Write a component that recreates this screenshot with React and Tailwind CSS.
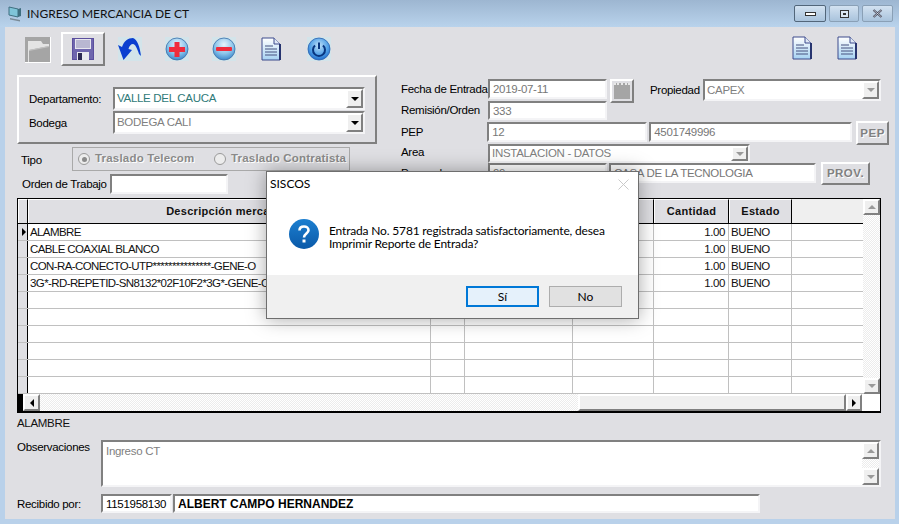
import React from 'react';

const raised = 'border-2 border-t-white border-l-white border-b-[#808080] border-r-[#808080] bg-[#dfdfe3]';
const sunken = 'border-2 border-t-[#808080] border-l-[#808080] border-b-[#f4f4f6] border-r-[#f4f4f6] bg-white';

const rows = [
  { name: 'ALAMBRE', qty: '1.00', state: 'BUENO' },
  { name: 'CABLE COAXIAL BLANCO', qty: '1.00', state: 'BUENO' },
  { name: 'CON-RA-CONECTO-UTP***************-GENE-O', qty: '1.00', state: 'BUENO' },
  { name: '3G*-RD-REPETID-SN8132*02F10F2*3G*-GENE-C', qty: '1.00', state: 'BUENO' },
  {}, {}, {}, {}, {}, {},
];

function Arrow({ dir = 'down', color = '#000' }) {
  const pts = { down: '0,0 8,0 4,4', up: '0,4 8,4 4,0', left: '4,0 4,8 0,4', right: '0,0 0,8 4,4' };
  const vertical = dir === 'up' || dir === 'down';
  return (
    <svg width={vertical ? 8 : 4} height={vertical ? 4 : 8} viewBox={vertical ? '0 0 8 4' : '0 0 4 8'}>
      <polygon points={pts[dir]} fill={color} />
    </svg>
  );
}

function Field({ className, value, textClass = 'text-[#777]' }) {
  return (
    <div className={`${sunken} ${className} shrink-0 overflow-hidden pl-[3px] leading-[17px] whitespace-nowrap ${textClass}`}>
      {value}
    </div>
  );
}

function Combo({ className, value, textClass, disabled }) {
  return (
    <div className={`${sunken} ${className} shrink-0 flex items-stretch`}>
      <div className={`flex-1 pl-[2px] leading-[19px] whitespace-nowrap overflow-hidden ${textClass}`}>{value}</div>
      <div className={`${raised} w-[17px] flex items-center justify-center bg-[#efefef]`}>
        <Arrow dir="down" color={disabled ? '#999' : '#000'} />
      </div>
    </div>
  );
}

function FlagIcon() {
  return (
    <svg width="26" height="26" viewBox="0 0 26 26">
      <rect width="26" height="26" fill="#fff" />
      <rect width="25" height="25" fill="#a5a5a5" />
      <path d="M4 4H16L18 7H24V9L4 13V25H3V4Z" fill="#e4e4e4" />
      <path d="M4 13L24 9V10L4 14Z" fill="#c4c4c4" />
    </svg>
  );
}

function SaveIcon() {
  return (
    <svg width="22" height="22" viewBox="0 0 22 22">
      <rect width="22" height="22" fill="#5b4f9e" />
      <rect x="1" y="1" width="20" height="20" fill="#6f66ae" />
      <rect x="3" y="1" width="16" height="10" fill="#e6e6ee" />
      <path d="M4 3H18M4 5H18M4 7H18M4 9H18" stroke="#8b88b5" />
      <rect x="5" y="14" width="12" height="8" fill="#e9e9ef" />
      <rect x="6" y="15" width="4" height="7" fill="#2d2a55" />
    </svg>
  );
}

function UndoIcon() {
  return (
    <svg width="24" height="24" viewBox="0 0 24 24">
      <rect width="24" height="24" fill="#d3e4ea" />
      <path d="M0 8L4 10C6 4 10 1 15 1C19 2 22 10 23 19L21 17C19 11 17 7 15 7C13 7 11 9 10.5 12L14 13L5.5 23Z" fill="#0b3fd0" />
    </svg>
  );
}

function BallIcon({ id, minus }) {
  return (
    <svg width="24" height="24" viewBox="0 0 24 24">
      <defs>
        <radialGradient id={id} cx=".5" cy=".3" r=".75">
          <stop offset="0" stopColor="#e6f4fb" />
          <stop offset=".55" stopColor="#8cc4ea" />
          <stop offset="1" stopColor="#2f7fc8" />
        </radialGradient>
      </defs>
      <rect width="24" height="24" fill="#d3e4ea" />
      <circle cx="12" cy="12" r="11" fill={`url(#${id})`} stroke="#3a6ea8" strokeWidth=".8" />
      {minus ? (
        <rect x="4" y="10" width="16" height="4" rx="1" fill="#ef2b3c" />
      ) : (
        <path d="M9.5 5H14.5V10H20V15H14.5V20H9.5V15H4V10H9.5Z" fill="#ef2b3c" />
      )}
    </svg>
  );
}

function DocIcon({ id }) {
  return (
    <svg width="24" height="24" viewBox="0 0 24 24">
      <defs>
        <linearGradient id={id} x1="0" y1="0" x2="0" y2="1">
          <stop offset="0" stopColor="#fff" />
          <stop offset="1" stopColor="#a6d2f2" />
        </linearGradient>
      </defs>
      <path d="M3 1H15L21 7V23H3Z" fill={`url(#${id})`} stroke="#3c4a8c" />
      <path d="M15 1V7H21" fill="#dfe8f5" stroke="#3c4a8c" />
      <path d="M21 7V23" stroke="#27346f" strokeWidth="2" />
      <path d="M6 9H14M6 12H18M6 15H18M6 18H18" stroke="#44517e" />
    </svg>
  );
}

function PowerIcon() {
  return (
    <svg width="24" height="24" viewBox="0 0 24 24">
      <defs>
        <radialGradient id="pw" cx=".5" cy=".35" r=".7">
          <stop offset="0" stopColor="#bfe0f8" />
          <stop offset=".6" stopColor="#4f9fe6" />
          <stop offset="1" stopColor="#1763c6" />
        </radialGradient>
      </defs>
      <rect width="24" height="24" fill="#d3e4ea" />
      <circle cx="12" cy="12" r="11" fill="url(#pw)" stroke="#2b62b0" strokeWidth=".8" />
      <path d="M8 8.5A6 6 0 1 0 16 8.5" fill="none" stroke="#07357f" strokeWidth="2" />
      <path d="M12 5.5V12" stroke="#07357f" strokeWidth="2" />
    </svg>
  );
}

function WinIcon() {
  return (
    <svg width="15" height="16" viewBox="0 0 15 16">
      <path d="M1 1L10 3V11L1 9Z" fill="#7fc4d8" stroke="#3f6f80" />
      <path d="M10 3L13 2V10L10 11Z" fill="#3f6f80" />
      <path d="M2 12L12 14V15.5L2 13.5Z" fill="#7a8a96" />
    </svg>
  );
}

function WinButton({ className, children }) {
  return (
    <div className={`h-[17px] rounded-[2px] border bg-gradient-to-b from-[#d3e2f1] to-[#a9c3dc] flex items-center justify-center ${className}`}>
      {children}
    </div>
  );
}

function Toolbar() {
  return (
    <div className="h-[48px] flex items-start">
      <div className="ml-[20px] mt-[10px]"><FlagIcon /></div>
      <div className={`${raised} ml-[10px] mt-[5px] w-[44px] h-[34px] flex items-center justify-center`}><SaveIcon /></div>
      <div className="ml-[13px] mt-[10px]"><UndoIcon /></div>
      <div className="ml-[23px] mt-[10px]"><BallIcon id="plus" /></div>
      <div className="ml-[23px] mt-[10px]"><BallIcon id="minus" minus /></div>
      <div className="ml-[23px] mt-[10px]"><DocIcon id="doc1" /></div>
      <div className="ml-[24px] mt-[10px]"><PowerIcon /></div>
      <div className="ml-[459px] mt-[9px]"><DocIcon id="doc2" /></div>
      <div className="ml-[21px] mt-[9px]"><DocIcon id="doc3" /></div>
    </div>
  );
}

function LeftForm() {
  return (
    <div className="w-[360px] shrink-0">
      <div className={`${raised} h-[69px] pl-[10px] pt-[10px]`}>
        <div className="flex h-[24px]">
          <div className="w-[84px] leading-[24px] text-black">Departamento:</div>
          <Combo className="w-[252px] h-[23px]" value="VALLE DEL CAUCA" textClass="text-[#2f7a78]" />
        </div>
        <div className="flex h-[24px]">
          <div className="w-[84px] leading-[24px] text-black">Bodega</div>
          <Combo className="w-[252px] h-[23px]" value="BODEGA CALI" textClass="text-[#808080]" />
        </div>
      </div>
      <div className="flex mt-[3px] h-[24px]">
        <div className="w-[55px] pl-[4px] leading-[26px] text-black">Tipo</div>
        <div className="w-[278px] border border-[#a9a9a9] bg-[#dfdfe3] flex items-center pl-[5px] font-bold text-[#8a8a8a] tracking-[0.2px] [text-shadow:1px_1px_0_#fff] whitespace-nowrap">
          <span className="w-[12px] h-[12px] rounded-full border border-[#9a9a9a] bg-[#ececec] flex items-center justify-center mr-[5px]">
            <span className="w-[5px] h-[5px] rounded-full bg-[#8a8a8a]" />
          </span>
          <span className="w-[119px]">Traslado Telecom</span>
          <span className="w-[12px] h-[12px] rounded-full border border-[#9a9a9a] bg-[#ececec] mr-[5px]" />
          <span>Traslado Contratista</span>
        </div>
      </div>
      <div className="flex mt-[3px] h-[20px]">
        <div className="w-[93px] pl-[5px] leading-[20px] text-black whitespace-nowrap">Orden de Trabajo</div>
        <Field className="w-[118px] h-[20px]" value="" />
      </div>
    </div>
  );
}

function RightForm() {
  return (
    <div className="ml-[24px] w-[488px] pt-[4px]">
      <div className="flex h-[22px] items-start">
        <div className="w-[87px] leading-[20px] text-black whitespace-nowrap">Fecha de Entrada:</div>
        <Field className="w-[119px] h-[20px]" value="2019-07-11" />
        <div className={`${raised} ml-[3px] w-[24px] h-[24px] p-[2px]`}>
          <div className="w-full h-full bg-[#a5a5a5] border-t-2 border-dotted border-[#e8e8e8]" />
        </div>
        <div className="ml-[16px] w-[53px] leading-[22px] text-black">Propiedad</div>
        <Combo className="w-[178px] h-[22px]" value="CAPEX" textClass="text-[#808080]" disabled />
      </div>
      <div className="flex h-[20px] items-start">
        <div className="w-[87px] leading-[18px] text-black">Remisión/Orden</div>
        <Field className="w-[119px] h-[19px]" value="333" />
      </div>
      <div className="flex h-[23px] items-start">
        <div className="w-[87px] leading-[22px] text-black">PEP</div>
        <Field className="w-[160px] h-[20px] mt-px" value="12" />
        <Field className="ml-[2px] w-[203px] h-[20px] mt-px" value="4501749996" />
        <div className={`${raised} ml-[4px] w-[33px] h-[24px] text-center font-bold text-[#808080] leading-[20px] tracking-[0.5px] [text-shadow:1px_1px_0_#fff]`}>PEP</div>
      </div>
      <div className="flex h-[19px] items-start">
        <div className="w-[87px] leading-[17px] text-black">Area</div>
        <Combo className="w-[262px] h-[19px]" value="INSTALACION - DATOS" textClass="text-[#808080] !leading-[15px]" disabled />
      </div>
      <div className="flex h-[22px] items-start">
        <div className="w-[87px] leading-[20px] text-black">Proveedor</div>
        <Field className="w-[119px] h-[20px]" value="99" />
        <Field className="ml-[2px] w-[207px] h-[20px]" value="CASA DE LA TECNOLOGIA" />
        <div className={`${raised} ml-[5px] -mt-px w-[49px] h-[23px] text-center font-bold text-[#808080] leading-[19px] tracking-[0.5px] [text-shadow:1px_1px_0_#fff]`}>PROV.</div>
      </div>
    </div>
  );
}

function HeaderCell({ children, className = '' }) {
  return (
    <div className={`h-[24px] border-r border-black border-t border-t-white border-l border-l-white bg-[#dfdfe3] text-center font-bold text-[11px] text-[#111] tracking-[0.3px] leading-[22px] whitespace-nowrap overflow-hidden ${className}`}>
      {children}
    </div>
  );
}

function Grid() {
  const cols = 'grid grid-cols-[10px_403px_34px_108px_81px_75px_63px_71px]';
  const dotted = 'bg-[repeating-conic-gradient(#ececec_0%_25%,#fff_0%_50%)] bg-[length:2px_2px]';
  return (
    <div className="mt-[3px] w-[864px] h-[215px] border-t border-l border-r border-b-2 border-black bg-white flex flex-col">
      <div className="flex flex-1 min-h-0">
        <div className="w-[845px] flex flex-col overflow-hidden">
          <div className={`${cols} border-b border-black`}>
            <HeaderCell />
            <HeaderCell>Descripción mercancia</HeaderCell>
            <HeaderCell />
            <HeaderCell />
            <HeaderCell />
            <HeaderCell>Cantidad</HeaderCell>
            <HeaderCell>Estado</HeaderCell>
            <div className="h-[24px] bg-[#efefef]" />
          </div>
          {rows.map((r, i) => (
            <div key={i} className={`${cols} h-[17px] shrink-0 border-b border-[#c0c0c0] leading-[16px] text-[#111] tracking-[-0.4px]`}>
              <div className="bg-[#dfdfe3] border-r border-black flex items-center justify-end pr-[1px]">
                {i === 0 && <Arrow dir="right" />}
              </div>
              <div className="border-r border-[#c0c0c0] pl-[2px] tracking-[-0.6px] whitespace-nowrap overflow-hidden">{r.name}</div>
              <div className="border-r border-[#c0c0c0]" />
              <div className="border-r border-[#c0c0c0]" />
              <div className="border-r border-[#c0c0c0]" />
              <div className="border-r border-[#c0c0c0] text-right pr-[3px]">{r.qty}</div>
              <div className="border-r border-[#c0c0c0] pl-[2px]">{r.state}</div>
              <div />
            </div>
          ))}
        </div>
        <div className={`w-[17px] flex flex-col justify-between ${dotted}`}>
          <div className={`${raised} h-[16px] flex items-center justify-center bg-[#efefef]`}><Arrow dir="up" color="#999" /></div>
          <div className={`${raised} h-[16px] flex items-center justify-center bg-[#efefef]`}><Arrow dir="down" color="#999" /></div>
        </div>
      </div>
      <div className="h-[17px] flex shrink-0">
        <div className="w-[5px] bg-black" />
        <div className={`${raised} w-[17px] flex items-center justify-center bg-[#efefef]`}><Arrow dir="left" /></div>
        <div className={`flex-1 ${dotted}`} />
        <div className={`${raised} w-[268px] bg-[#efefef]`} />
        <div className={`${raised} w-[16px] flex items-center justify-center bg-[#efefef]`}><Arrow dir="right" /></div>
        <div className="w-[18px] bg-white" />
      </div>
    </div>
  );
}

function Footer() {
  return (
    <div>
      <div className="h-[20px] leading-[20px] text-[#111]">ALAMBRE</div>
      <div className="mt-[7px] flex h-[47px]">
        <div className="w-[84px] leading-[14px] text-black">Observaciones</div>
        <div className={`${sunken} w-[780px] flex`}>
          <div className="flex-1 pl-[3px] text-[#808080] leading-[18px]">Ingreso CT</div>
          <div className="w-[17px] flex flex-col justify-between bg-[repeating-conic-gradient(#ececec_0%_25%,#fff_0%_50%)] bg-[length:2px_2px]">
            <div className={`${raised} h-[17px] flex items-center justify-center bg-[#efefef]`}><Arrow dir="up" color="#999" /></div>
            <div className={`${raised} h-[17px] flex items-center justify-center bg-[#efefef]`}><Arrow dir="down" color="#999" /></div>
          </div>
        </div>
      </div>
      <div className="mt-[7px] flex h-[19px]">
        <div className="w-[84px] leading-[20px] text-black">Recibido por:</div>
        <Field className="w-[71px] h-[19px]" value="1151958130" textClass="text-black" />
        <Field className="ml-px w-[587px] h-[19px] font-bold text-[12px]" value="ALBERT CAMPO HERNANDEZ" textClass="text-black tracking-normal" />
      </div>
    </div>
  );
}

function Dialog() {
  return (
    <div className="absolute left-[266px] top-[171px] w-[373px] h-[148px] border border-[#6e6e6e] bg-white shadow-[0_0_18px_rgba(0,0,0,0.35)] flex flex-col font-['Lato','Noto_Sans',sans-serif] text-[12px] tracking-normal text-black">
      <div className="h-[24px] flex items-center justify-between pl-[3px] pr-[9px]">
        <span>SISCOS</span>
        <svg width="11" height="11" viewBox="0 0 11 11"><path d="M0.5 0.5L10.5 10.5M10.5 0.5L0.5 10.5" stroke="#c9c9c9" /></svg>
      </div>
      <div className="flex-1 flex pl-[22px] pt-[26px]">
        <svg width="30" height="30" viewBox="0 0 30 30" className="mt-[-3px] shrink-0">
          <defs>
            <linearGradient id="q" x1="0" y1="0" x2="0" y2="1">
              <stop offset="0" stopColor="#1c7fd0" />
              <stop offset="1" stopColor="#0a59a8" />
            </linearGradient>
          </defs>
          <circle cx="15" cy="15" r="15" fill="url(#q)" />
          <path d="M10.5 11.5C10.5 8.5 12.5 7.5 15 7.5C17.5 7.5 19.5 9 19.5 11.2C19.5 14.5 15 14.5 15 18.5" fill="none" stroke="#fff" strokeWidth="2.6" />
          <rect x="13.5" y="20.5" width="3" height="3" fill="#fff" />
        </svg>
        <div className="ml-[10px] mt-[2px] leading-[13px] tracking-[-0.17px] whitespace-nowrap">
          Entrada No. 5781 registrada satisfactoriamente, desea<br />Imprimir Reporte de Entrada?
        </div>
      </div>
      <div className="h-[43px] bg-[#f0f0f0] flex justify-end items-center gap-[10px] pr-[16px]">
        <div className="w-[73px] h-[21px] border-2 border-[#0078d7] bg-[#e5f1fb] text-center leading-[17px]">Sí</div>
        <div className="w-[73px] h-[21px] border border-[#adadad] bg-[#e1e1e1] text-center leading-[19px]">No</div>
      </div>
    </div>
  );
}

export default function App() {
  return (
    <div className="relative w-[899px] h-[524px] overflow-hidden bg-[#b9d1ea] font-['Liberation_Sans',Arial,sans-serif] text-[11.5px] tracking-[-0.3px]">
      <div className="h-[27px] bg-gradient-to-b from-[#9db6d1] to-[#b9d3ec] flex items-center pl-[8px]">
        <WinIcon />
        <span className="ml-[4px] font-['Lato','Noto_Sans',sans-serif] text-[12px] tracking-normal text-[#111]">INGRESO MERCANCIA DE CT</span>
        <div className="ml-auto mr-[6px] flex gap-[3px]">
          <WinButton className="w-[32px] border-[#52667a]"><span className="w-[11px] h-[4px] border border-[#333] bg-white" /></WinButton>
          <WinButton className="w-[30px] border-[#8aa0b6]"><span className="w-[9px] h-[8px] border border-[#333] bg-[#dbe7f2] flex items-center justify-center"><span className="w-[3px] h-[2px] border border-[#333]" /></span></WinButton>
          <WinButton className="w-[31px] border-[#8aa0b6]">
            <svg width="11" height="9" viewBox="0 0 11 9"><path d="M1.5 1L9.5 8M9.5 1L1.5 8" stroke="#445" strokeWidth="2" /><path d="M1.5 1L9.5 8M9.5 1L1.5 8" stroke="#dfe8f1" strokeWidth=".7" /></svg>
          </WinButton>
        </div>
      </div>
      <div className="ml-[5px] w-[890px] h-[492px] bg-[#dfdfe3]">
        <Toolbar />
        <div className="pl-[12px]">
          <div className="flex h-[120px]">
            <LeftForm />
            <RightForm />
          </div>
          <Grid />
          <Footer />
        </div>
      </div>
      <Dialog />
    </div>
  );
}
